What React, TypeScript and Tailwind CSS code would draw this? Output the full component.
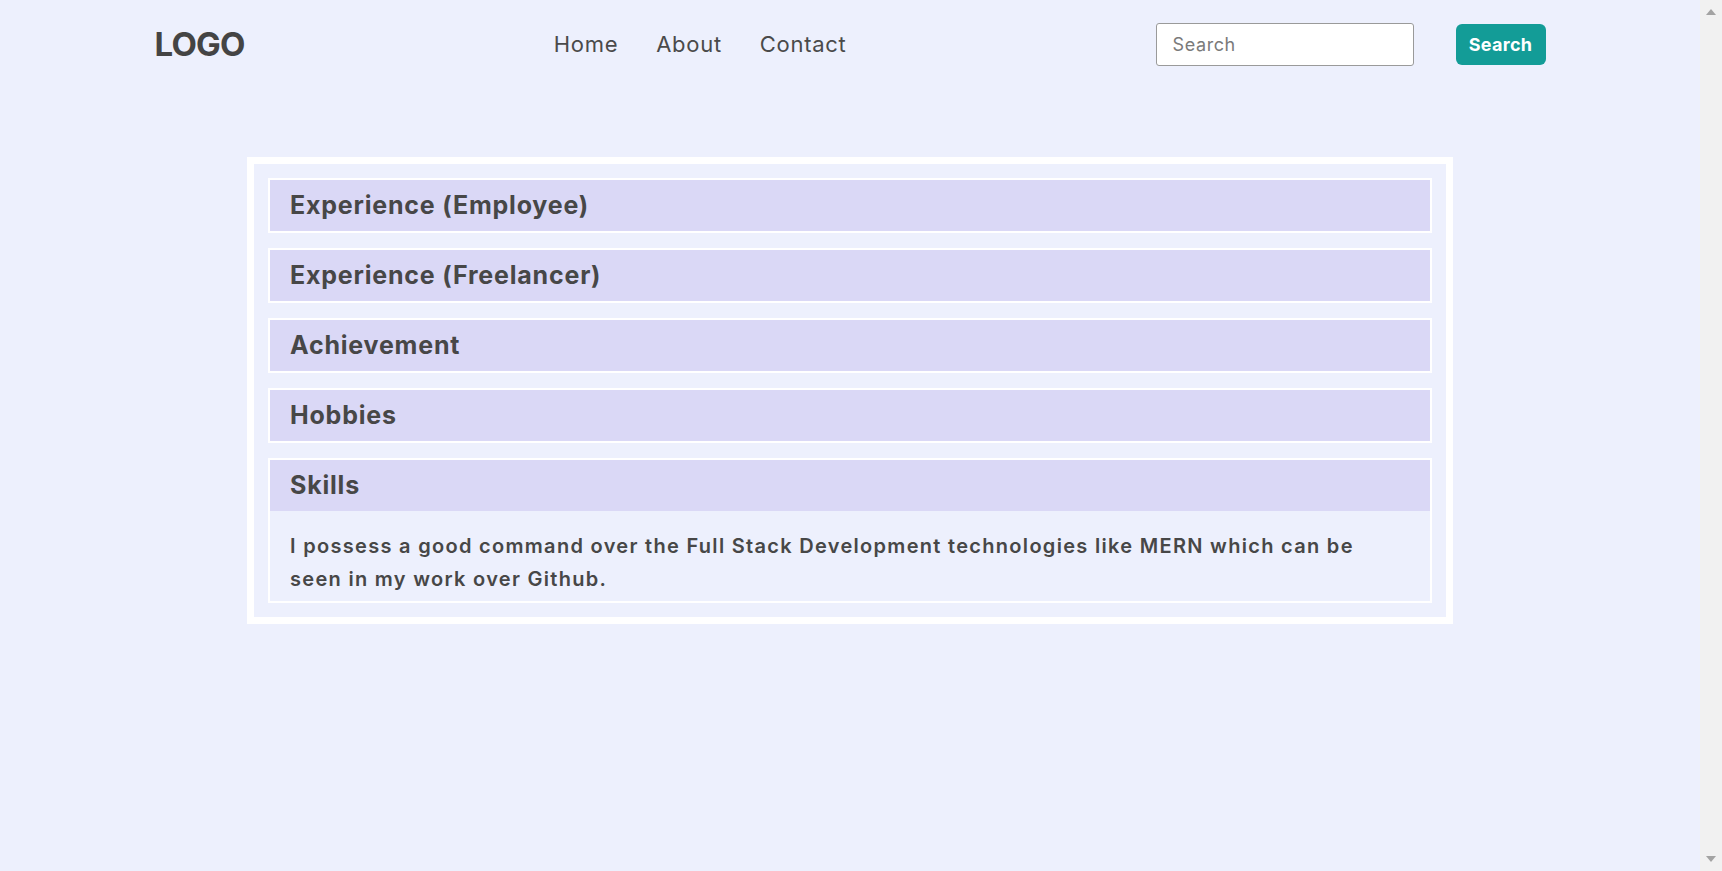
import { useState } from 'react'

const sections = [
  { title: 'Experience (Employee)', body: false },
  { title: 'Experience (Freelancer)', body: false },
  { title: 'Achievement', body: false },
  { title: 'Hobbies', body: false },
  { title: 'Skills', body: true },
]

function Header() {
  return (
    <header className="mx-auto flex w-[1391px] items-center justify-between pt-[23px]">
      <div className="text-[33px] font-bold leading-none tracking-[-0.8px] text-[#444]">LOGO</div>

      <nav className="flex items-center gap-[38px] text-[22px] tracking-[0.7px] text-[#4a4a4a]">
        <a href="#">Home</a>
        <a href="#">About</a>
        <a href="#">Contact</a>
      </nav>

      <div className="flex items-center gap-[42px]">
        <input
          type="text"
          placeholder="Search"
          className="h-[43px] w-[258px] rounded-[3px] border border-[#9a9a9a] bg-white px-4 text-[18px] tracking-[0.6px] text-[#444] outline-none placeholder:text-[#7a7a7a]"
        />
        <button className="h-[41px] w-[90px] rounded-[6px] bg-[#139c97] text-[18px] font-bold tracking-[0.3px] text-white">
          Search
        </button>
      </div>
    </header>
  )
}

// the browser's scrollbar, as it shows in the picture
function Scrollbar() {
  return (
    <div className="flex w-[22px] shrink-0 flex-col items-center justify-between bg-[#f1f1f1] py-[9px]">
      <svg width="10" height="6" viewBox="0 0 10 6">
        <path d="M5 0 L10 6 L0 6 Z" fill="#a3a3a3" />
      </svg>
      <svg width="10" height="6" viewBox="0 0 10 6">
        <path d="M0 0 L10 0 L5 6 Z" fill="#a3a3a3" />
      </svg>
    </div>
  )
}

export default function App() {
  const [open, setOpen] = useState(4)

  return (
    <div className="flex h-screen bg-[#edf0fd] font-['Inter','Noto_Sans',sans-serif] text-[#474747]">
      <div className="min-w-0 flex-1">
        <Header />

        <main className="mx-auto mt-[91px] flex w-[1206px] flex-col gap-[15px] border-[7px] border-white p-[14px]">
          {sections.map((s, i) => (
            <div key={s.title} className="border-2 border-white">
              <button
                onClick={() => setOpen(open === i ? -1 : i)}
                className="flex h-[51px] w-full items-center bg-[#dad8f6] px-5 text-left text-[25px] font-bold tracking-[0.8px]"
              >
                {s.title}
              </button>
              {open === i && s.body ? (
                <div className="h-[90px] px-5 pt-[19px] text-[20px] font-semibold leading-[33px] tracking-[1.3px]">
                  I possess a good command over the Full Stack Development technologies like MERN which can be
                  <br />
                  seen in my work over Github.
                </div>
              ) : null}
            </div>
          ))}
        </main>
      </div>
      <Scrollbar />
    </div>
  )
}
